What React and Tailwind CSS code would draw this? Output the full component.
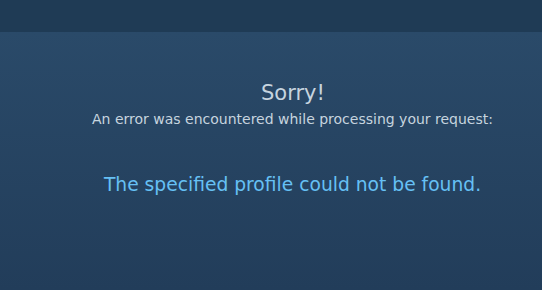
export default function App() {
  return (
    <div className="w-[542px] h-[290px] flex flex-col overflow-hidden" style={{ fontFamily: '"DejaVu Sans", Verdana, sans-serif' }}>
      <div className="h-8 bg-[#1f3b55]" />
      <div className="flex-1 bg-gradient-to-b from-[#2a4a69] to-[#223d5a] flex flex-col items-center">
        <h2 className="mt-[48px] text-[21px] leading-[26px] text-[#c6d4df] ml-[44px]">Sorry!</h2>
        <h3 className="mt-[3px] text-[14px] leading-[20px] text-[#c6d4df] ml-[43px]">An error was encountered while processing your request:</h3>
        <h3 className="mt-[44px] text-[18.7px] leading-[24px] text-[#66c0f4] ml-[43px]">The specified profile could not be found.</h3>
      </div>
    </div>
  );
}
